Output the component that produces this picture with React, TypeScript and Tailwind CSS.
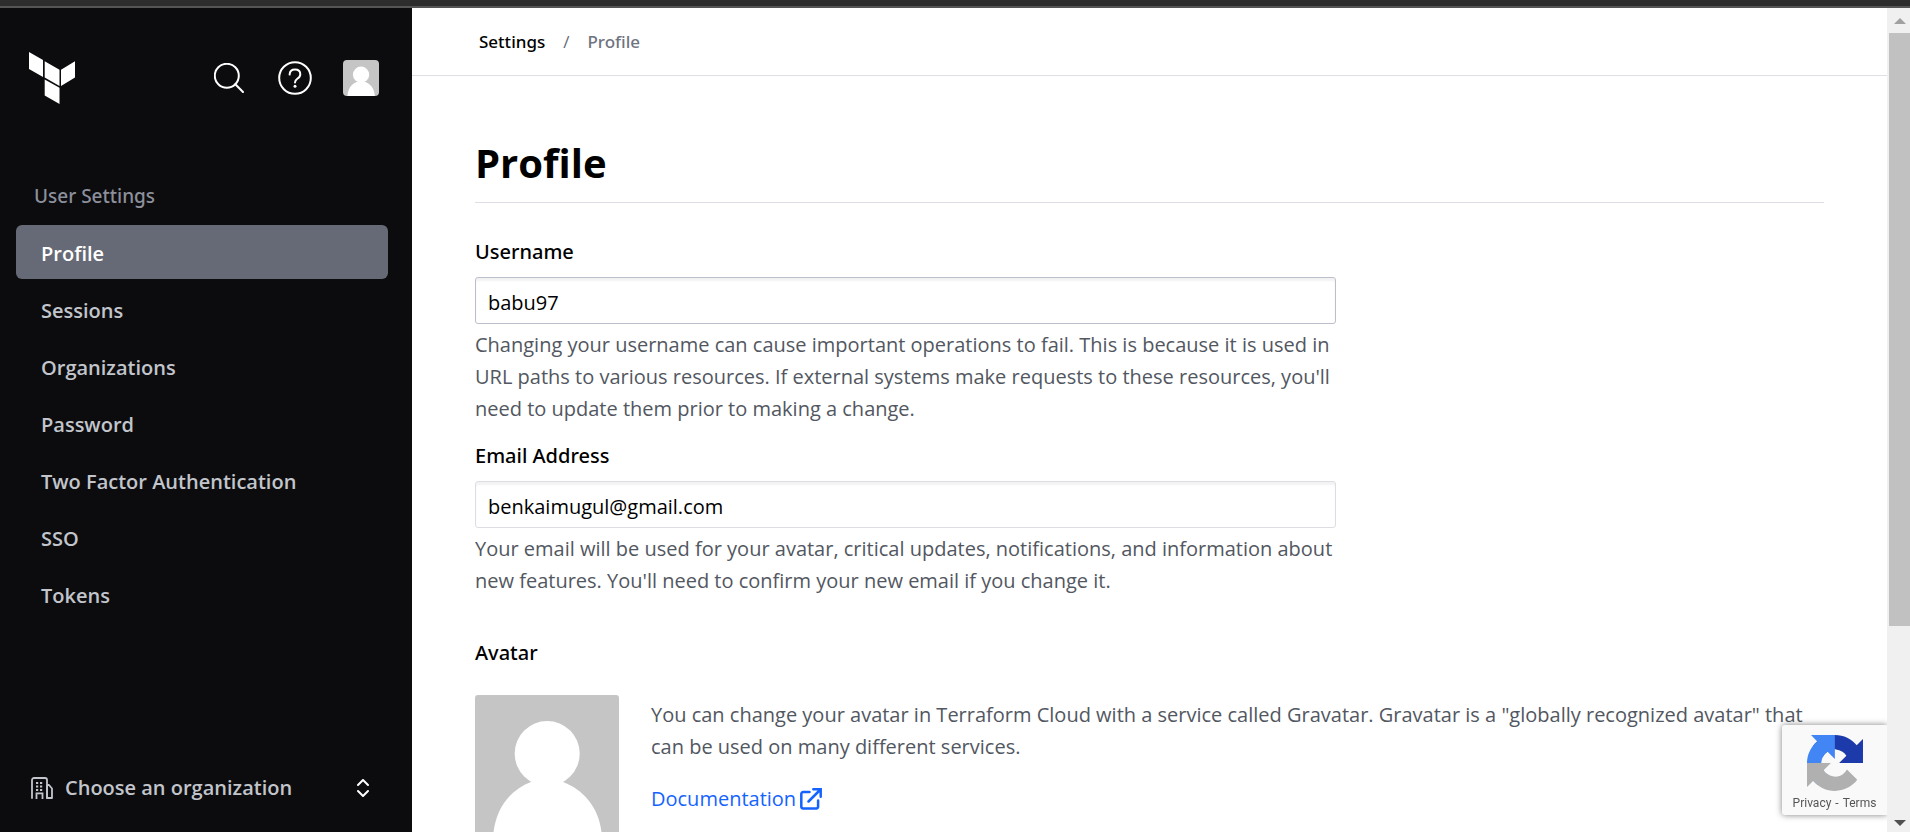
import type { ReactNode } from "react";

const navItems = [
  "Profile",
  "Sessions",
  "Organizations",
  "Password",
  "Two Factor Authentication",
  "SSO",
  "Tokens",
];

function TerraformLogo() {
  return (
    <svg viewBox="0 0 46 52" className="h-[52px] w-[46px]" fill="#fff" aria-hidden="true">
      <path d="M0 0 14 8V25L0 17ZM15.7 9.3 30.5 17.8V34L15.7 25.6ZM32 17.8 46 9.3V25.5L32 34ZM15.7 27.5 30.5 35.8V52L15.7 43.5Z" />
    </svg>
  );
}

function SearchIcon() {
  return (
    <svg viewBox="0 0 30 30" className="size-[30px]" fill="none" stroke="#fff" strokeWidth="2" aria-hidden="true">
      <circle cx="12.8" cy="12.8" r="12" />
      <path d="M21.3 21.3 29 29" strokeLinecap="round" />
    </svg>
  );
}

function HelpIcon() {
  return (
    <svg viewBox="0 0 34 34" className="size-[34px]" fill="none" stroke="#fff" strokeWidth="2" aria-hidden="true">
      <circle cx="17" cy="17" r="15.8" />
      <path d="M11.6 13.6C11.8 10.4 14 8.6 17 8.6c3.200 0 5.300 1.900 5.300 4.600 0 2.300-1.400 3.500-3 4.600C17.700 18.900 17 19.600 17 21.600" strokeLinecap="round" />
      <circle cx="17" cy="25.2" r="1.500" fill="#fff" stroke="none" />
    </svg>
  );
}

function AvatarPicture({ className }: { className: string }) {
  return (
    <svg viewBox="0 0 144 144" className={className} role="img" aria-label="Avatar">
      <rect width="144" height="144" fill="#c5c5c5" />
      <circle cx="72.200" cy="58.500" r="32.500" fill="#fff" />
      <path d="M56 87C35 95 19 114 18 144H127C126 114 109 95 88 87Z" fill="#fff" />
    </svg>
  );
}

function OrgIcon() {
  return (
    <svg viewBox="0 0 22 22" className="size-[22px] shrink-0" fill="none" stroke="#c2c5cb" strokeWidth="1.800" aria-hidden="true">
      <path d="M1 21V3a2 2 0 0 1 2-2h11a2 2 0 0 1 2 2v18" strokeLinecap="round" />
      <path d="M16 8h2l3 3.500V21h-5V8" strokeLinejoin="round" />
      <path d="M5.500 22v-5.600h6V22" />
      <path d="M5 6h2.200M9 6h2.200M5 9.500h2.200M9 9.500h2.200M5 13h2.200M9 13h2.200" strokeWidth="2.200" />
    </svg>
  );
}

function ChevronsIcon() {
  return (
    <svg viewBox="0 0 12 18" className="h-[18px] w-3 shrink-0" fill="none" stroke="#fff" strokeWidth="2" strokeLinecap="round" strokeLinejoin="round" aria-hidden="true">
      <path d="M1 6 6 1l5 5M1 12l5 5 5-5" />
    </svg>
  );
}

function ExternalIcon() {
  return (
    <svg viewBox="0 0 22 22" className="size-[22px]" fill="none" stroke="#1563ff" strokeWidth="2.500" aria-hidden="true">
      <path d="M9.500 4H3.200A1.900 1.900 0 0 0 1.300 5.900V18.600a1.900 1.900 0 0 0 1.900 1.900H16.200a1.900 1.900 0 0 0 1.900-1.900V12.500" strokeLinecap="round" />
      <path d="M8.500 13.500 20.500 1.500M13.300 1.300H20.700V8.700" strokeLinecap="round" />
    </svg>
  );
}

function RecaptchaLogo() {
  return (
    <svg viewBox="0 0 64 64" className="size-14" aria-hidden="true">
      <path fill="#1c3aa9" d="M64 31.955l-.033-1.370V4.687l-7.160 7.160C50.948 4.674 42.033.093 32.050.093c-10.400 0-19.622 4.960-25.458 12.640l11.736 11.860a15.550 15.550 0 0 1 4.754-5.334c2.050-1.600 4.952-2.906 8.968-2.906.485 0 .860.057 1.135.163 4.976.393 9.288 3.140 11.828 7.124l-8.307 8.307L64 31.953" />
      <path fill="#4285f4" d="M31.862.094l-1.370.033H4.594l7.160 7.160C4.580 13.147 0 22.060 0 32.046c0 10.400 4.960 19.622 12.640 25.458L24.500 45.768a15.550 15.550 0 0 1-5.334-4.754c-1.600-2.050-2.906-4.952-2.906-8.968 0-.485.057-.860.163-1.135.393-4.976 3.140-9.288 7.124-11.828l8.307 8.307L31.860.095" />
      <path fill="#b0b0b0" d="M.001 32.045l.033 1.370v25.898l7.160-7.160c5.860 7.173 14.774 11.754 24.760 11.754 10.400 0 19.622-4.960 25.458-12.640l-11.736-11.860a15.550 15.550 0 0 1-4.754 5.334c-2.050 1.600-4.952 2.906-8.968 2.906-.485 0-.860-.057-1.135-.163-4.976-.393-9.288-3.140-11.828-7.124l8.307-8.307L0 32.047" />
    </svg>
  );
}

function Sidebar() {
  return (
    <aside className="flex w-[412px] shrink-0 flex-col bg-[#0c0c0e] pb-7">
      <div className="flex items-center pt-11 pr-[33px] pl-[29px]">
        <a href="#home" aria-label="Terraform Cloud">
          <TerraformLogo />
        </a>
        <div className="ml-auto flex items-center">
          <button type="button" aria-label="Search" className="mr-[34px]">
            <SearchIcon />
          </button>
          <button type="button" aria-label="Help" className="mr-[31px]">
            <HelpIcon />
          </button>
          <button type="button" aria-label="Account">
            <AvatarPicture className="size-9 rounded" />
          </button>
        </div>
      </div>
      <nav aria-label="User Settings" className="mt-[77px] px-4">
        <h2 className="pl-[18px] font-['Noto_Sans',sans-serif] text-[19px] leading-[30px] font-medium text-[#8c909c]">User Settings</h2>
        <ul className="mt-3.5 mr-2 flex flex-col gap-[3px]">
          {navItems.map((item, i) => (
            <li key={item}>
              <a
                href="#"
                aria-current={i === 0 ? "page" : undefined}
                className={
                  i === 0
                    ? "flex h-[54px] items-center rounded-md bg-[#656a76] px-[25px] pt-[3px] text-xl font-semibold text-white"
                    : "flex h-[54px] items-center rounded-md px-[25px] pt-[3px] text-xl font-semibold text-[#c2c5cb]"
                }
              >
                {item}
              </a>
            </li>
          ))}
        </ul>
      </nav>
      <button type="button" className="mt-auto mr-[43px] ml-[31px] flex items-center text-xl font-semibold text-[#c2c5cb]">
        <OrgIcon />
        <span className="ml-3 leading-8">Choose an organization</span>
        <span className="ml-auto">
          <ChevronsIcon />
        </span>
      </button>
    </aside>
  );
}

function Field({
  id,
  label,
  type,
  value,
  border,
  children,
}: {
  id: string;
  label: string;
  type: string;
  value: string;
  border: string;
  children: ReactNode;
}) {
  return (
    <div className="max-w-[861px]">
      <label htmlFor={id} className="block font-['Noto_Sans',sans-serif] text-xl leading-8 font-medium text-black">
        {label}
      </label>
      <input
        id={id}
        type={type}
        defaultValue={value}
        aria-describedby={id + "-help"}
        className={"mt-[9px] block h-[47px] w-full rounded-[3px] border bg-white px-3 pt-[3px] text-xl text-black shadow-[inset_0_3px_2px_rgba(0,0,0,0.05)] outline-none " + border}
      />
      <p id={id + "-help"} className="mt-[5px] text-xl leading-8 text-[#525761]">
        {children}
      </p>
    </div>
  );
}

function Scrollbar() {
  return (
    <div className="flex w-[23px] shrink-0 flex-col bg-[#f0f0f0] pl-0.5" aria-hidden="true">
      <div className="flex h-[25px] items-center justify-center">
        <svg viewBox="0 0 12 6" className="h-1.5 w-3" fill="#a0a0a0">
          <path d="M0 6 6 0l6 6Z" />
        </svg>
      </div>
      <div className="h-[72%] bg-[#c1c1c1]" />
      <div className="mt-auto flex h-[18px] items-center justify-center">
        <svg viewBox="0 0 12 6" className="h-1.5 w-3" fill="#505050">
          <path d="M0 0h12L6 6Z" />
        </svg>
      </div>
    </div>
  );
}

export default function App() {
  return (
    <div className="flex h-screen flex-col overflow-hidden bg-white font-['Open_Sans','Noto_Sans',sans-serif]">
      <div className="h-2 shrink-0 border-b-2 border-[#555555] bg-[#2d2d2d]" />
      <div className="flex min-h-0 flex-1">
        <Sidebar />
        <main className="min-w-0 flex-1 overflow-hidden">
          <nav aria-label="Breadcrumb" className="border-b border-[#dedfe6] pt-5 pb-[19px] pl-[67px]">
            <ol className="flex text-[17px] leading-7">
              <li className="font-['Noto_Sans',sans-serif] font-medium text-black">
                <a href="#settings">Settings</a>
              </li>
              <li aria-hidden="true" className="mx-[18px] text-[#656a76]">/</li>
              <li aria-current="page" className="font-['Noto_Sans',sans-serif] font-medium text-[#6f7480]">Profile</li>
            </ol>
          </nav>
          <div className="pt-[60px] pr-[63px] pl-[63px]">
            <h1 className="border-b border-[#dedfe6] pb-3 text-[40px] leading-[54px] font-bold text-black">Profile</h1>
            <form className="mt-[33px]">
              <Field id="username" label="Username" type="text" value="babu97" border="border-[#bbbecb]">
                Changing your username can cause important operations to fail. This is because it is used in URL paths
                to various resources. If external systems make requests to these resources, you'll need to update them
                prior to making a change.
              </Field>
              <div className="mt-[15px]">
                <Field id="email" label="Email Address" type="email" value="benkaimugul@gmail.com" border="border-[#dcdee4]">
                  Your email will be used for your avatar, critical updates, notifications, and information about new
                  features. You'll need to confirm your new email if you change it.
                </Field>
              </div>
            </form>
            <section className="mt-10">
              <h2 className="font-['Noto_Sans',sans-serif] text-xl leading-8 font-medium text-black">Avatar</h2>
              <div className="mt-[26px] flex gap-8">
                <AvatarPicture className="size-36 shrink-0 rounded-[3px]" />
                <div className="pt-1 text-xl leading-8 text-[#525761]">
                  <p>
                    You can change your avatar in Terraform Cloud with a service called Gravatar. Gravatar is a
                    "globally recognized avatar" that can be used on many different services.
                  </p>
                  <a href="#documentation" className="mt-5 inline-flex items-center gap-1 text-[#1563ff]">
                    Documentation
                    <ExternalIcon />
                  </a>
                </div>
              </div>
            </section>
          </div>
        </main>
        <Scrollbar />
      </div>
      <div className="fixed right-[23px] bottom-[17px] flex h-[90px] w-[105px] flex-col items-center rounded-l-[3px] bg-[#f9f9f9] pt-2.5 shadow-[0_0_6px_rgba(0,0,0,0.5)] [clip-path:inset(-10px_0_-10px_-10px)]">
        <RecaptchaLogo />
        <div className="flex gap-1 font-[Roboto,sans-serif] text-xs leading-6 whitespace-nowrap text-[#555555]">
          <a href="#privacy">Privacy</a>
          <span aria-hidden="true">-</span>
          <a href="#terms">Terms</a>
        </div>
      </div>
    </div>
  );
}
